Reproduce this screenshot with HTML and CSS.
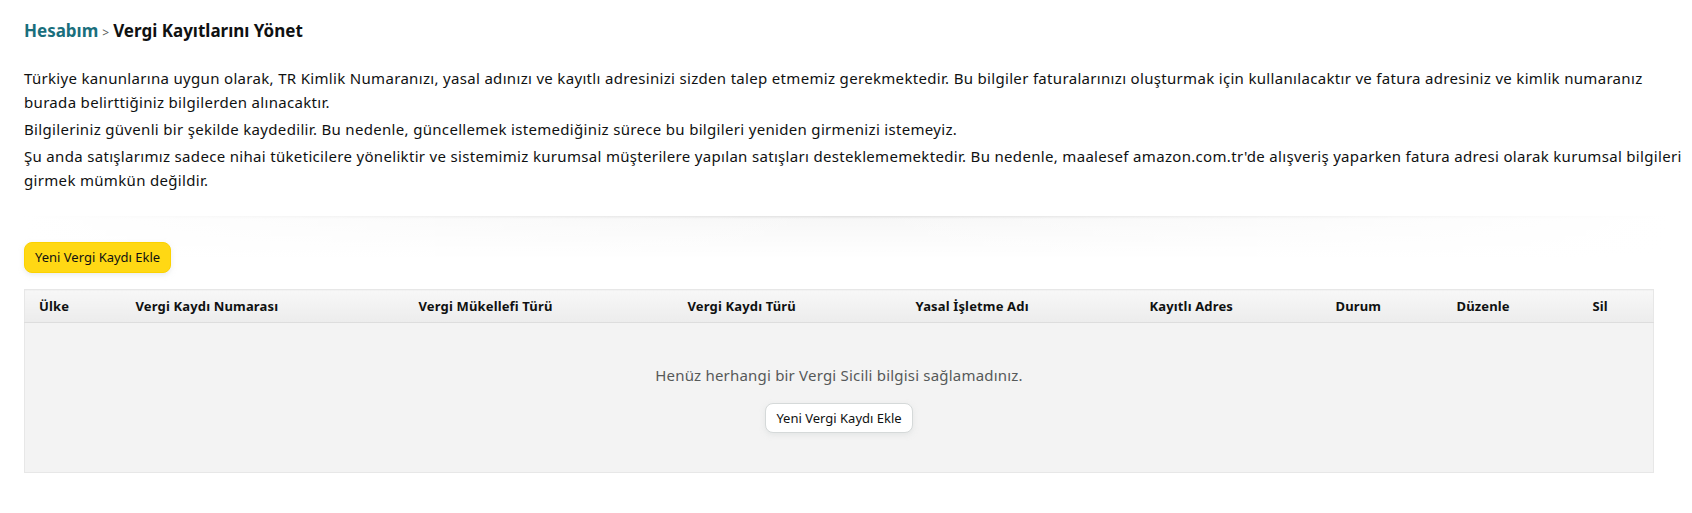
FILE: index.html
```html
<!DOCTYPE html>
<html lang="tr">
<head>
<meta charset="utf-8">
<title>Vergi Kayıtlarını Yönet</title>
<link rel="stylesheet" href="styles.css">
</head>
<body>
<div class="page">
  <div class="breadcrumb">
    <a class="crumb-link" href="#">Hesabım</a>
    <span class="crumb-sep">&gt;</span>
    <span class="crumb-current">Vergi Kayıtlarını Yönet</span>
  </div>

  <div class="intro">
    <p>Türkiye kanunlarına uygun olarak, TR Kimlik Numaranızı, yasal adınızı ve kayıtlı adresinizi sizden talep etmemiz gerekmektedir. Bu bilgiler faturalarınızı oluşturmak için kullanılacaktır ve fatura adresiniz ve kimlik numaranız burada belirttiğiniz bilgilerden alınacaktır.</p>
    <p>Bilgileriniz güvenli bir şekilde kaydedilir. Bu nedenle, güncellemek istemediğiniz sürece bu bilgileri yeniden girmenizi istemeyiz.</p>
    <p>Şu anda satışlarımız sadece nihai tüketicilere yöneliktir ve sistemimiz kurumsal müşterilere yapılan satışları desteklememektedir. Bu nedenle, maalesef amazon.com.tr'de alışveriş yaparken fatura adresi olarak kurumsal bilgileri girmek mümkün değildir.</p>
  </div>

  <div class="divider"></div>

  <button class="btn btn-primary" type="button">Yeni Vergi Kaydı Ekle</button>

  <table class="tax-table">
    <colgroup>
      <col class="c1"><col class="c2"><col class="c3"><col class="c4"><col class="c5"><col class="c6"><col class="c7"><col class="c8"><col class="c9">
    </colgroup>
    <thead>
      <tr>
        <th>Ülke</th>
        <th>Vergi Kaydı Numarası</th>
        <th>Vergi Mükellefi Türü</th>
        <th>Vergi Kaydı Türü</th>
        <th>Yasal İşletme Adı</th>
        <th>Kayıtlı Adres</th>
        <th>Durum</th>
        <th>Düzenle</th>
        <th>Sil</th>
      </tr>
    </thead>
    <tbody>
      <tr>
        <td class="empty" colspan="9">
          <div class="empty-text">Henüz herhangi bir Vergi Sicili bilgisi sağlamadınız.</div>
          <button class="btn btn-secondary" type="button">Yeni Vergi Kaydı Ekle</button>
        </td>
      </tr>
    </tbody>
  </table>
</div>
</body>
</html>
```

FILE: styles.css
```css
* { box-sizing: border-box; }

html, body {
  margin: 0;
  padding: 0;
  background: #fff;
}

body {
  font-family: "Noto Sans", "Open Sans", "Liberation Sans", sans-serif;
  color: #0f1111;
  font-size: 14px;
  line-height: 24px;
}

.page {
  padding: 19px 10px 0 24px;
}

.breadcrumb {
  display: flex;
  align-items: baseline;
  gap: 4px;
  font-size: 17px;
  line-height: 24px;
  font-weight: 700;
}

.crumb-link {
  color: #1a6f7d;
  text-decoration: none;
}

.crumb-sep {
  font-size: 12px;
  font-weight: 400;
  color: #565959;
}

.crumb-current {
  color: #0f1111;
}

.intro {
  margin-top: 21px;
  font-size: 15px;
  letter-spacing: 0.32px;
}

.intro p {
  margin: 0 0 3px 0;
}

.divider {
  position: relative;
  width: 1644px;
  height: 44px;
  margin: 24px 0 -18px 0;
  background: linear-gradient(to bottom, rgba(0,0,0,.12), rgba(0,0,0,.03) 3px, transparent);
}

.divider::after {
  content: "";
  display: block;
  height: 44px;
  background: linear-gradient(to right, #fff, rgba(255,255,255,0), #fff);
}

.btn {
  font-family: inherit;
  font-size: 13px;
  line-height: 29px;
  height: 31px;
  padding: 0 10px;
  border-radius: 8px;
  cursor: pointer;
  color: #0f1111;
}

.btn-primary {
  position: relative;
  background: #ffd814;
  border: 1px solid #fcd200;
  box-shadow: 0 2px 5px rgba(213,217,217,.5);
}

.tax-table {
  margin-top: 16px;
  width: 1629px;
  border-collapse: collapse;
  table-layout: fixed;
  border: 1px solid #e7e7e7;
}

.c1 { width: 97px; }
.c2 { width: 283px; }
.c3 { width: 269px; }
.c4 { width: 228px; }
.c5 { width: 234px; }
.c6 { width: 186px; }
.c7 { width: 121px; }
.c8 { width: 136px; }
.c9 { width: 75px; }

.tax-table th {
  text-align: left;
  font-weight: 700;
  font-size: 13px;
  letter-spacing: 0.15px;
  line-height: 20px;
  padding: 6px 14px 6px 14px;
  background: linear-gradient(to bottom, #f7f7f7, #ececec);
  border-bottom: 1px solid #dddddd;
  white-space: nowrap;
}

.tax-table td.empty {
  background: #f3f3f3;
  text-align: center;
  padding: 41px 0 39px 0;
}

.empty-text {
  font-size: 15px;
  letter-spacing: 0.2px;
  line-height: 22px;
  color: #565959;
  margin-bottom: 17px;
}

.btn-secondary {
  height: 30px;
  line-height: 28px;
  background: #fff;
  border: 1px solid #d5d9d9;
  box-shadow: 0 2px 5px rgba(213,217,217,.5);
}
```
